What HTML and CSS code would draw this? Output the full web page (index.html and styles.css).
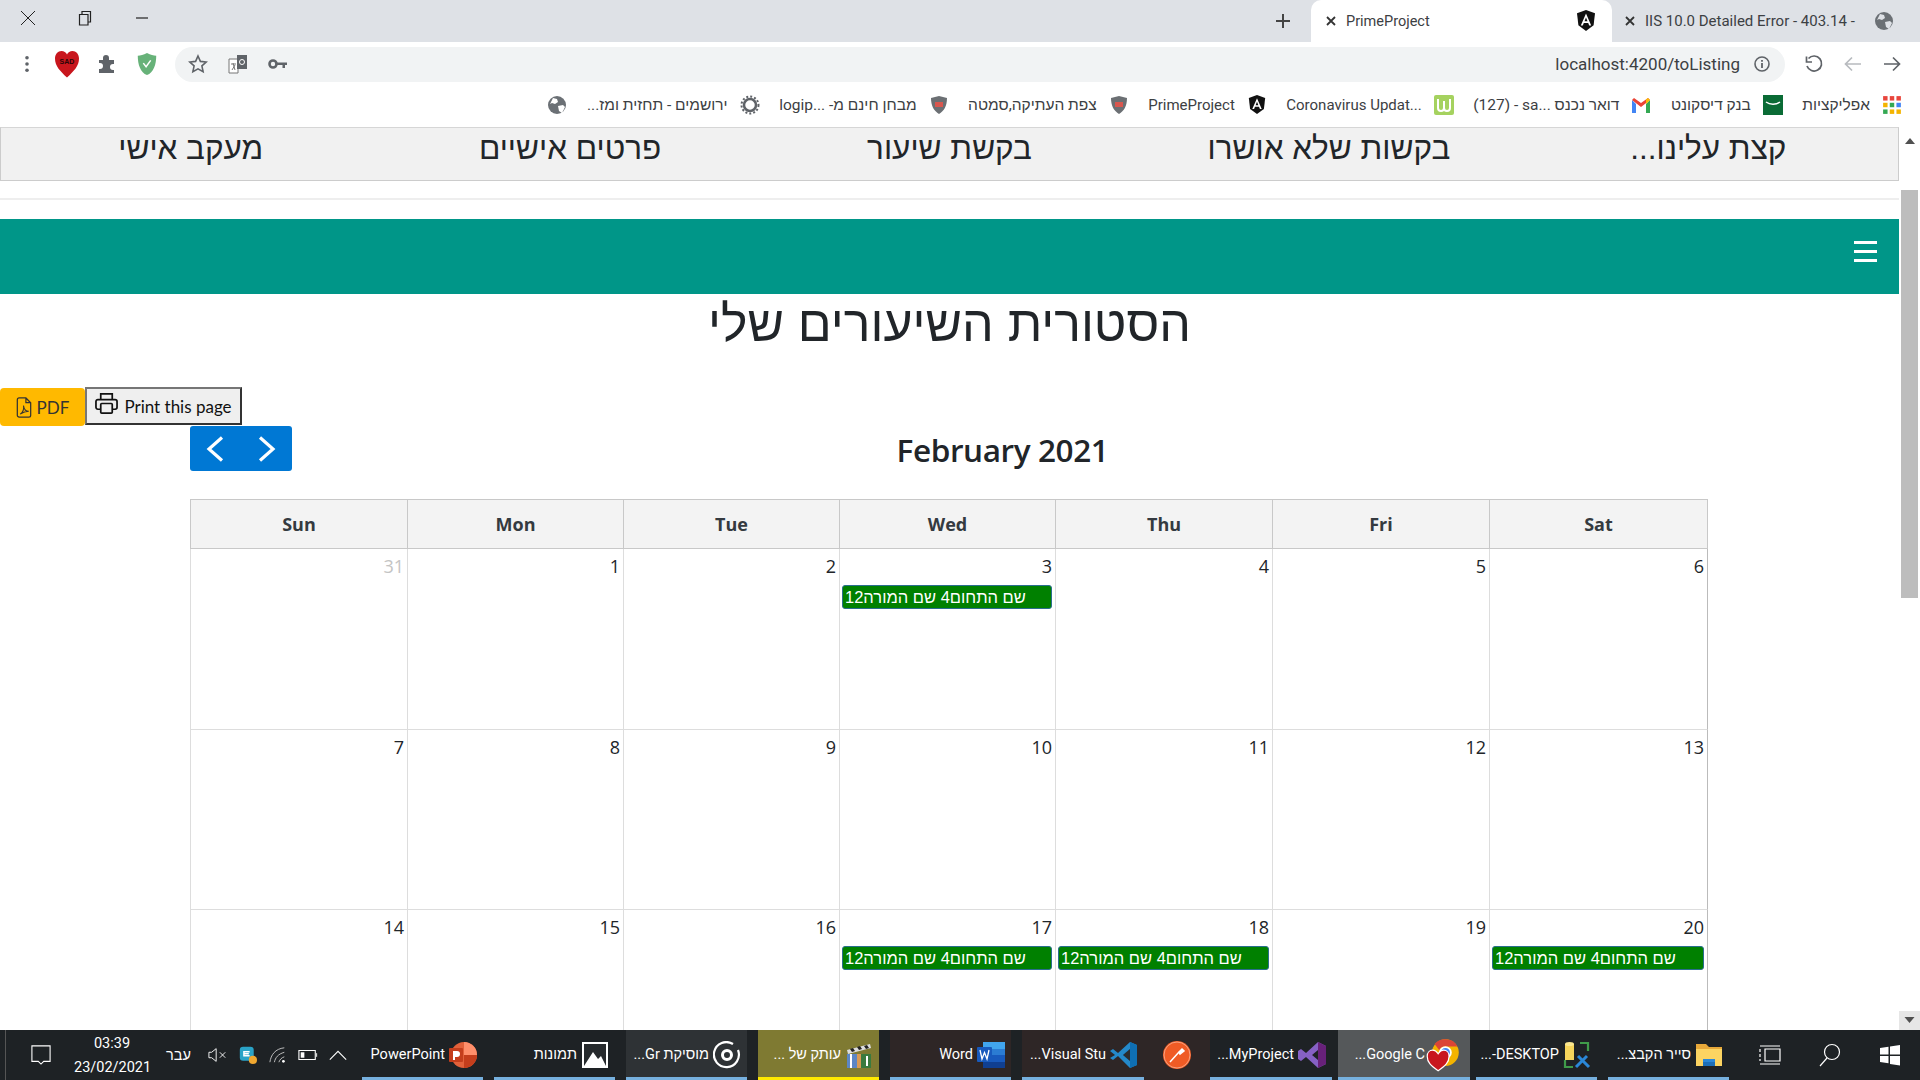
FILE: index.html
```html
<!DOCTYPE html>
<html lang="he">
<head>
  <meta charset="UTF-8" />
  <title>PrimeProject</title>
  <link rel="stylesheet" href="styles.css">
</head>
<body>
  <div class="tabstrip">
    <div class="win-controls">
      <svg class="win-icon" viewBox="0 0 16 16"><path d="M1 1l14 14M15 1L1 15" fill="none" stroke="#222"/></svg>
      <svg class="win-icon" viewBox="0 0 16 16"><path d="M2.500 4.500H11V15H2.500zM5 4.500v-3h8.500V12H11" fill="none" stroke="#222" stroke-width="1.200"/></svg>
      <svg class="win-icon" viewBox="0 0 16 16"><path d="M2 8h12" stroke="#222" stroke-width="1.200"/></svg>
    </div>
    <svg class="new-tab" viewBox="0 0 16 16"><path d="M8 1v14M1 8h14" stroke="#444" stroke-width="2"/></svg>
    <div class="tab tab-active">
      <svg class="tab-close" viewBox="0 0 10 10"><path d="M1 1l8 8M9 1L1 9" stroke="#333" stroke-width="1.800"/></svg>
      <span class="tab-title">PrimeProject</span>
      <svg class="fav" viewBox="0 0 20 22"><path d="M10 0L1 3.300l1.400 12L10 21l7.600-5.700 1.400-12z" fill="#111"/><path d="M10 3.500L4.800 15.500h2l1-2.600h4.400l1 2.600h2zM8.500 11.200L10 7.500l1.500 3.700z" fill="#fff"/></svg>
    </div>
    <div class="tab tab-other">
      <svg class="tab-close" viewBox="0 0 10 10"><path d="M1 1l8 8M9 1L1 9" stroke="#333" stroke-width="1.800"/></svg>
      <span class="tab-title">IIS 10.0 Detailed Error - 403.14 -</span>
      <svg class="fav" viewBox="0 0 20 20"><circle cx="10" cy="10" r="9" fill="#6b7075"/><path d="M6 3l4 1 1 3-3 2-3-1-2 1zM11 11l5-1 2 2-3 6-3-2z" fill="#dee1e6"/></svg>
    </div>
  </div>

  <div class="toolbar">
    <svg class="dots" viewBox="0 0 6 20"><circle cx="3" cy="3" r="2" fill="#5f6368"/><circle cx="3" cy="10" r="2" fill="#5f6368"/><circle cx="3" cy="17" r="2" fill="#5f6368"/></svg>
    <svg class="heart" viewBox="0 0 28 28"><path d="M14 27.500C7 21 2 16 2 8.500 2 4 5 1 8.500 1c2.500 0 4.500 1.500 5.500 3.500C15 2.500 17 1 19.500 1 23 1 26 4 26 8.500c0 7.500-5 12.500-12 19z" fill="#c8161d"/><text class="heart-text" x="14" y="14" text-anchor="middle">SAD</text></svg>
    <svg class="puzzle" viewBox="0 0 20 20"><path d="M2 6h4V4a3 3 0 016 0v2h5v4h-1a3 3 0 000 6h1v3H2v-4h1a3 3 0 000-6H2z" fill="#5f6368"/></svg>
    <svg class="shield" viewBox="0 0 22 26"><path d="M11 1C7 3 4 4 1 4c0 10 3 18 10 21 7-3 10-11 10-21-3 0-6-1-10-3z" fill="#67b279"/><path d="M7 12l3 4 5-7" fill="none" stroke="#fff" stroke-width="1.600"/></svg>
    <div class="address">
      <svg class="star" viewBox="0 0 20 20"><path d="M10 2l2.400 5.400 5.800.6-4.300 3.900 1.200 5.800L10 14.800l-5.100 2.900 1.200-5.800L1.800 8l5.800-.6z" fill="none" stroke="#5f6368" stroke-width="1.600"/></svg>
      <svg class="translate" viewBox="0 0 20 20"><path d="M1 5h9v14H1z" fill="#fff" stroke="#777"/><path d="M9 1h10v14H9z" fill="#5f6368"/><circle cx="14" cy="8" r="2.500" fill="none" stroke="#fff"/><path d="M3 10h5M5 9l2 7M7 11l-3 5" stroke="#777"/></svg>
      <svg class="key" viewBox="0 0 20 12"><circle cx="5" cy="6" r="3.500" fill="none" stroke="#5f6368" stroke-width="2.600"/><path d="M9 4.500h10V7h-2v3h-2.500V7H9z" fill="#5f6368"/></svg>
      <span class="url">localhost:4200/toListing</span>
      <svg class="info" viewBox="0 0 18 18"><circle cx="9" cy="9" r="7" fill="none" stroke="#5f6368" stroke-width="1.600"/><path d="M9 8v5M9 5v1.800" stroke="#5f6368" stroke-width="1.800"/></svg>
    </div>
    <svg class="nav-arrow" viewBox="0 0 20 20"><path d="M4.500 4.500A7.500 7.500 0 113 12" fill="none" stroke="#5f6368" stroke-width="1.700"/><path d="M2.500 2.500V8H8" fill="none" stroke="#5f6368" stroke-width="1.700"/></svg>
    <svg class="nav-arrow" viewBox="0 0 20 20"><path d="M18 10H3M9 3.500L2.500 10 9 16.500" fill="none" stroke="#b8bbbf" stroke-width="1.700"/></svg>
    <svg class="nav-arrow" viewBox="0 0 20 20"><path d="M2 10h15M11 3.500l6.500 6.500-6.500 6.500" fill="none" stroke="#5f6368" stroke-width="1.700"/></svg>
  </div>

  <div class="bookmarks" dir="rtl">
    <div class="bookmark">
      <svg class="bm-icon" viewBox="0 0 18 18"><rect x="1" y="1" width="4" height="4" fill="#e8453c"/><rect x="7" y="1" width="4" height="4" fill="#e8453c"/><rect x="13" y="1" width="4" height="4" fill="#e8453c"/><rect x="1" y="7" width="4" height="4" fill="#f4b400"/><rect x="7" y="7" width="4" height="4" fill="#34a853"/><rect x="13" y="7" width="4" height="4" fill="#4285f4"/><rect x="1" y="13" width="4" height="4" fill="#34a853"/><rect x="7" y="13" width="4" height="4" fill="#f4b400"/><rect x="13" y="13" width="4" height="4" fill="#f4b400"/></svg>
      <span>אפליקציות</span>
    </div>
    <div class="bookmark">
      <svg class="bm-icon" viewBox="0 0 20 20"><rect width="20" height="20" fill="#0a6b35"/><path d="M3 7c4 3 10 3 14 0" fill="none" stroke="#fff" stroke-width="1.500"/></svg>
      <span>בנק דיסקונט</span>
    </div>
    <div class="bookmark">
      <svg class="bm-icon" viewBox="0 0 20 16"><path d="M1 3v13h4V7z" fill="#4285f4"/><path d="M19 3v13h-4V7z" fill="#34a853"/><path d="M1 3l9 7 9-7-2-2-7 5-7-5z" fill="#ea4335"/><path d="M15 7l4-4-2-2-2 1.500z" fill="#fbbc04"/></svg>
      <span>דואר נכנס ...<bdi>sa</bdi> - <bdi>(127)</bdi></span>
    </div>
    <div class="bookmark">
      <svg class="bm-icon" viewBox="0 0 20 20"><rect width="20" height="20" rx="2" fill="#a5d25f"/><path d="M4 4v9q0 3 3 3t3-3V6v7q0 3 3 3t3-3V4" fill="none" stroke="#fff" stroke-width="2"/></svg>
      <span class="bm-latin" dir="ltr">Coronavirus Updat...</span>
    </div>
    <div class="bookmark">
      <svg class="bm-icon" viewBox="0 0 20 22"><path d="M10 0L1 3.300l1.400 12L10 21l7.600-5.700 1.400-12z" fill="#111"/><path d="M10 3.500L4.800 15.500h2l1-2.600h4.400l1 2.600h2zM8.500 11.200L10 7.500l1.500 3.700z" fill="#fff"/></svg>
      <span class="bm-latin" dir="ltr">PrimeProject</span>
    </div>
    <div class="bookmark">
      <svg class="bm-icon" viewBox="0 0 18 20"><path d="M9 1L1 3c0 8 3 13 8 16 5-3 8-8 8-16z" fill="#6b6f73"/><path d="M5 7h8v5H5z" fill="#d8564e"/></svg>
      <span>צפת העתיקה,סמטה</span>
    </div>
    <div class="bookmark">
      <svg class="bm-icon" viewBox="0 0 18 20"><path d="M9 1L1 3c0 8 3 13 8 16 5-3 8-8 8-16z" fill="#6b6f73"/><path d="M5 7h8v5H5z" fill="#d8564e"/></svg>
      <span>מבחן חינם מ- ...logip</span>
    </div>
    <div class="bookmark">
      <svg class="bm-icon" viewBox="0 0 20 20"><circle cx="10" cy="10" r="6" fill="none" stroke="#5f6368" stroke-width="2.500"/><circle cx="10" cy="10" r="8.500" fill="none" stroke="#5f6368" stroke-width="2" stroke-dasharray="2 2"/></svg>
      <span>ירושמים - תחזית ומז...</span>
    </div>
    <svg class="bm-icon" viewBox="0 0 20 20"><circle cx="10" cy="10" r="9" fill="#6b7075"/><path d="M6 3l4 1 1 3-3 2-3-1-2 1zM11 11l5-1 2 2-3 6-3-2z" fill="#fff"/></svg>
  </div>

  <div class="viewport">
    <div class="page">
      <div class="top-nav" dir="rtl">
        <a>קצת עלינו...</a>
        <a>בקשות שלא אושרו</a>
        <a>בקשת שיעור</a>
        <a>פרטים אישיים</a>
        <a>מעקב אישי</a>
      </div>
      <div class="nav-gap"></div>
      <div class="teal-bar">
        <div class="burger"><span></span><span></span><span></span></div>
      </div>
      <h1 class="page-title" dir="rtl">הסטורית השיעורים שלי</h1>
      <div class="export-row">
        <button class="btn-pdf">
          <svg class="pdf-icon" viewBox="0 0 16 22"><path d="M1 3a2 2 0 012-2h7l5 5v13a2 2 0 01-2 2H3a2 2 0 01-2-2zM10 1v5h5" fill="none" stroke="#333" stroke-width="1.300"/><path d="M4 18c3-2 4-6 3.500-9 .5 4 2.500 6 5.500 6-3 0-6 1-9 3z" fill="none" stroke="#333" stroke-width="1.100"/></svg>
          PDF
        </button>
        <button class="btn-print">
          <svg class="print-icon" viewBox="0 0 24 24"><path d="M6 8V2h12v6M6 18H3a2 2 0 01-2-2v-6a2 2 0 012-2h18a2 2 0 012 2v6a2 2 0 01-2 2h-3" fill="none" stroke="#111" stroke-width="1.800"/><rect x="6" y="12" width="12" height="10" rx="1" fill="none" stroke="#111" stroke-width="1.800"/></svg>
          Print this page
        </button>
      </div>

      <div class="calendar">
        <div class="cal-toolbar">
          <div class="cal-nav">
            <svg class="chev" viewBox="0 0 20 26"><path d="M17 1.500L4 13l13 11.500" fill="none" stroke="#fff" stroke-width="3.200"/></svg>
            <svg class="chev" viewBox="0 0 20 26"><path d="M3 1.500L16 13 3 24.500" fill="none" stroke="#fff" stroke-width="3.200"/></svg>
          </div>
          <h2 class="cal-title">February 2021</h2>
          <div></div>
        </div>
        <div class="cal-head">
          <div>Sun</div><div>Mon</div><div>Tue</div><div>Wed</div><div>Thu</div><div>Fri</div><div>Sat</div>
        </div>
        <div class="cal-body">
          <div class="day muted">31</div>
          <div class="day">1</div>
          <div class="day">2</div>
          <div class="day">3<div class="event">שם התחום4 שם המורה12</div></div>
          <div class="day">4</div>
          <div class="day">5</div>
          <div class="day">6</div>
          <div class="day">7</div>
          <div class="day">8</div>
          <div class="day">9</div>
          <div class="day">10</div>
          <div class="day">11</div>
          <div class="day">12</div>
          <div class="day">13</div>
          <div class="day">14</div>
          <div class="day">15</div>
          <div class="day">16</div>
          <div class="day">17<div class="event">שם התחום4 שם המורה12</div></div>
          <div class="day">18<div class="event">שם התחום4 שם המורה12</div></div>
          <div class="day">19</div>
          <div class="day">20<div class="event">שם התחום4 שם המורה12</div></div>
        </div>
      </div>
    </div>
    <div class="scrollbar">
      <svg class="scroll-arrow" viewBox="0 0 10 6"><path d="M5 0l5 6H0z" fill="#505050"/></svg>
      <div class="scroll-track"><div class="scroll-thumb"></div></div>
      <svg class="scroll-arrow scroll-down" viewBox="0 0 10 6"><path d="M5 6l5-6H0z" fill="#505050"/></svg>
    </div>
  </div>

  <div class="taskbar">
    <div class="tray">
      <svg class="tray-notify" viewBox="0 0 22 22"><path d="M1 1h20v17h-7l-3 3-3-3H1z" fill="none" stroke="#fff" stroke-width="1.200"/></svg>
      <div class="clock"><div>03:39</div><div>23/02/2021</div></div>
      <span class="lang">עבר</span>
      <svg class="tray-icon" viewBox="0 0 22 18"><path d="M1 6h3l5-4v14l-5-4H1z" fill="none" stroke="#fff"/><path d="M13 6l6 6M19 6l-6 6" stroke="#fff"/></svg>
      <svg class="tray-icon" viewBox="0 0 22 22"><rect x="1" y="1" width="17" height="17" rx="4" fill="#2aa3c7"/><path d="M13 7H6v5h7M6 9.500h6" fill="none" stroke="#fff" stroke-width="1.800"/><circle cx="17" cy="17" r="5" fill="#f0a830"/></svg>
      <svg class="tray-icon" viewBox="0 0 22 20"><path d="M2 18C3 10 8 3 18 2M7 18c1-5 4-9 11-11M12 18c1-3 3-5 6-6" fill="none" stroke="#ccc"/><circle cx="17" cy="17" r="1.500" fill="#fff"/></svg>
      <svg class="tray-icon" viewBox="0 0 22 14"><path d="M1 2h18v10H1z" fill="none" stroke="#fff" stroke-width="1.200"/><rect x="3" y="4" width="4" height="6" fill="#fff"/><path d="M20.500 5v4" stroke="#fff"/></svg>
      <svg class="tray-icon" viewBox="0 0 22 12"><path d="M2 11l9-9 9 9" fill="none" stroke="#fff" stroke-width="1.200"/></svg>
    </div>
    <div class="task-list">
      <div class="task">
        <span>PowerPoint</span>
        <svg class="task-icon" viewBox="0 0 28 28"><circle cx="15" cy="14" r="13" fill="#e2613a"/><path d="M15 1a13 13 0 0113 13H15z" fill="#ff8f6b"/><path d="M15 14h13a13 13 0 01-13 13z" fill="#c43e1c"/><rect x="0" y="7" width="14" height="14" rx="1" fill="#c43e1c"/><path d="M4 10h4a2.500 2.500 0 010 6H6v3H4z" fill="#fff"/></svg>
      </div>
      <div class="task" dir="rtl">
        <svg class="task-icon" viewBox="0 0 28 28"><rect x="1" y="1" width="26" height="26" fill="#fff"/><rect x="3" y="3" width="22" height="22" fill="#262a2d"/><path d="M3 25l9-14 5 7 3-3 5 10z" fill="#fff"/></svg>
        <span>תמונות</span>
      </div>
      <div class="task task-grey" dir="rtl">
        <svg class="task-icon" viewBox="0 0 28 28"><path d="M20 3A12.500 12.500 0 1025 9" fill="none" stroke="#fff" stroke-width="2.200"/><circle cx="14" cy="14" r="4.500" fill="none" stroke="#fff" stroke-width="3"/></svg>
        <span>מוסיקת Gr...</span>
      </div>
      <div class="task task-olive" dir="rtl">
        <svg class="task-icon" viewBox="0 0 28 28"><path d="M2 9l23-6 1 4L3 13z" fill="#ddd"/><path d="M5 8l3-1 2 3-3 1zM12 6l3-1 2 3-3 1zM19 5l3-1 2 3-3 1z" fill="#222"/><rect x="2" y="13" width="10" height="14" fill="#5c86c4"/><rect x="12" y="13" width="4" height="14" fill="#d99a55"/><rect x="16" y="13" width="10" height="14" fill="#3a7a3e"/><path d="M6 13v14M22 15v10" stroke="#fff" stroke-width="2"/></svg>
        <span>עותק של ...</span>
      </div>
      <div class="task task-brown">
        <span>Word</span>
        <svg class="task-icon" viewBox="0 0 28 28"><rect x="6" y="1" width="22" height="26" rx="2" fill="#2b7cd3"/><rect x="6" y="1" width="22" height="7" fill="#41a5ee"/><rect x="6" y="14" width="22" height="7" fill="#185abd"/><rect x="6" y="21" width="22" height="6" fill="#103f91"/><rect x="0" y="6" width="15" height="15" rx="1" fill="#185abd"/><path d="M3 9l2 9 2.500-6.500L10 18l2-9" fill="none" stroke="#fff" stroke-width="1.300"/></svg>
      </div>
      <div class="task task-brown task-code" dir="rtl">
        <svg class="task-icon" viewBox="0 0 28 28"><path d="M20 1l7 3v20l-7 3L8 15l-5 4-3-2 5-3-5-4 3-2 5 4z" fill="#2489ca"/><path d="M20 1l7 3v20l-7 3zM20 8l-7 6 7 6z" fill="#0f6fb3"/><path d="M20 8l-7 6 7 6z" fill="#2b2d30"/></svg>
        <span>Visual Stu...</span>
      </div>
      <div class="task task-brown task-postman">
        <svg class="task-icon" viewBox="0 0 28 28"><circle cx="14" cy="14" r="14" fill="#ef5b25"/><circle cx="14" cy="14" r="13" fill="none" stroke="#f8a27f"/><path d="M7 21l9-10M16 11l3-3 2 2-4 3z" stroke="#fff" stroke-width="1.500" fill="#fff"/></svg>
      </div>
      <div class="task task-vs" dir="rtl">
        <svg class="task-icon" viewBox="0 0 28 28"><path d="M20 1l8 4v18l-8 4-12-11-5 4-3-2V10l3-2 5 4zM20 9l-6 5 6 5z" fill="#8661c5"/><path d="M20 1l8 4v18l-8 4z" fill="#68217a"/></svg>
        <span>MyProject...</span>
      </div>
      <div class="task task-chrome" dir="rtl">
        <svg class="task-icon" viewBox="0 0 28 28"><circle cx="16" cy="12" r="11" fill="#f4b400"/><path d="M16 1a11 11 0 0110 6H16a5 5 0 00-5 3L7 5a11 11 0 019-4z" fill="#db4437"/><circle cx="16" cy="12" r="4.500" fill="#4285f4" stroke="#fff" stroke-width="1.500"/><path d="M10 27C4 23 1 20 1 15c0-3 2-5 4.500-5 2 0 3.500 1.500 4.500 3 1-1.500 2.500-3 4.500-3C17 10 19 12 19 15c0 5-3 8-9 12z" fill="#c8161d" stroke="#fff"/></svg>
        <span>Google C...</span>
      </div>
      <div class="task" dir="rtl">
        <svg class="task-icon" viewBox="0 0 28 28"><path d="M2 3h9v16H2z" fill="#f6d55c"/><ellipse cx="6.500" cy="3" rx="4.500" ry="2" fill="#fbe78f"/><path d="M17 2h8v8M2 19v7h8" fill="none" stroke="#3f9b4a" stroke-width="2.200"/><path d="M13 26l11-11M15 15l11 11" stroke="#2b88d8" stroke-width="3"/></svg>
        <span>DESKTOP-...</span>
      </div>
      <div class="task" dir="rtl">
        <svg class="task-icon" viewBox="0 0 28 28"><path d="M1 3h10l3 3h13v19H1z" fill="#e8a93a"/><rect x="1" y="8" width="26" height="17" fill="#fcd462"/><path d="M8 25v-7h12v7h-4v-4h-4v4z" fill="#2b88d8"/><rect x="8" y="21" width="12" height="4" fill="#1d6fb8"/></svg>
        <span>סייר הקבצ...</span>
      </div>
    </div>
    <div class="sys-icons">
      <svg class="sys-icon" viewBox="0 0 22 24"><path d="M1 3h20M1 21h20M6 6h15v12H6zM1 6v3M1 11v3M1 16v2" fill="none" stroke="#fff" stroke-width="1.200"/></svg>
      <svg class="sys-icon" viewBox="0 0 22 24"><circle cx="13" cy="9" r="7.500" fill="none" stroke="#fff" stroke-width="1.200"/><path d="M8 15l-7 8" stroke="#fff" stroke-width="1.200"/></svg>
      <svg class="sys-icon" viewBox="0 0 22 24"><path d="M1 5l8.500-1.300V11.500H1zM11 3.400L21 2v9.500H11zM1 13h8.500v7.300L1 19zM11 13h10v9.500l-10-1.400z" fill="#fff"/></svg>
    </div>
  </div>
</body>
</html>
```

FILE: styles.css
```css
* {
  box-sizing: border-box;
}
html, body {
  margin: 0;
  padding: 0;
}
body {
  width: 1920px;
  height: 1080px;
  overflow: hidden;
  font-family: "Open Sans", "Liberation Sans", sans-serif;
  color: #212529;
  background: #fff;
}

/* browser chrome */
.tabstrip {
  height: 42px;
  background: #dee1e6;
  display: flex;
  align-items: flex-end;
}
.win-controls {
  display: flex;
  gap: 41px;
  align-items: center;
  height: 42px;
  padding: 0 0 6px 20px;
  margin-right: auto;
}
.win-icon {
  width: 16px;
  height: 16px;
}
.new-tab {
  width: 16px;
  height: 16px;
  margin: 0 20px 13px 0;
}
.tab {
  display: flex;
  align-items: center;
  height: 42px;
  font-size: 14.500px;
  color: #3c4043;
}
.tab-active {
  width: 301px;
  background: #fff;
  border-radius: 10px 10px 0 0;
  padding: 0 16px 0 10px;
}
.tab-other {
  width: 308px;
  padding: 0 26px 0 8px;
  font-size: 15px;
}
.tab-close {
  width: 10px;
  height: 10px;
  margin: 0 10px 0 5px;
  flex: none;
}
.tab-title {
  flex: 1;
  white-space: nowrap;
  font-family: "Roboto", "Liberation Sans", sans-serif;
}
.fav {
  width: 20px;
  height: 22px;
  flex: none;
}

.toolbar {
  height: 42px;
  background: #fff;
  display: flex;
  align-items: center;
  padding: 2px 0 0 24px;
}
.dots {
  width: 6px;
  height: 18px;
}
.heart {
  width: 28px;
  height: 28px;
  margin-left: 23px;
}
.heart-text {
  font-family: "Liberation Sans", sans-serif;
  font-size: 7px;
  font-weight: 700;
  fill: #2a0507;
}
.puzzle {
  width: 20px;
  height: 20px;
  margin-left: 16px;
}
.shield {
  width: 22px;
  height: 24px;
  margin-left: 19px;
}
.address {
  width: 1610px;
  height: 35px;
  margin-left: 17px;
  background: #f1f3f4;
  border-radius: 18px;
  display: flex;
  align-items: center;
  padding: 0 14px 0 13px;
}
.star {
  width: 20px;
  height: 20px;
}
.translate {
  width: 20px;
  height: 20px;
  margin-left: 20px;
}
.key {
  width: 20px;
  height: 12px;
  margin-left: 20px;
}
.url {
  margin-left: auto;
  font-family: "Roboto", "Liberation Sans", sans-serif;
  font-size: 17px;
  color: #3c4043;
}
.info {
  width: 18px;
  height: 18px;
  margin-left: 13px;
}
.nav-arrow {
  width: 20px;
  height: 20px;
  margin-left: 19px;
}

.bookmarks {
  height: 43px;
  background: #fff;
  display: flex;
  align-items: center;
  padding: 0 18px 2px 0;
  gap: 19.500px;
  font-family: "Roboto", "Liberation Sans", sans-serif;
  font-size: 15.500px;
  color: #3c4043;
}
.bookmark {
  display: flex;
  align-items: center;
  gap: 12px;
  white-space: nowrap;
}
.bm-latin {
  font-size: 15px;
}
.bm-icon {
  width: 20px;
  height: 20px;
  flex: none;
}

/* page area */
.viewport {
  height: 903px;
  display: flex;
  overflow: hidden;
}
.page {
  width: 1899px;
  flex: none;
}
.top-nav {
  height: 54px;
  display: grid;
  grid-template-columns: repeat(5, 1fr);
  background: #f1f1f1;
  border: 1px solid #ccc;
  border-top-color: #d6d6d6;
  font-size: 31.500px;
  line-height: 38px;
  font-family: "Liberation Sans", sans-serif;
}
.top-nav a {
  text-align: center;
  padding-top: 1px;
  color: #212529;
}
.nav-gap {
  height: 19px;
  border-bottom: 2px solid #eee;
}
.teal-bar {
  height: 75px;
  margin-top: 19px;
  background: #009688;
  display: flex;
  align-items: center;
  justify-content: flex-end;
  padding-right: 22px;
}
.burger {
  width: 23px;
  margin-bottom: 10px;
  display: flex;
  flex-direction: column;
  gap: 6px;
}
.burger span {
  height: 3px;
  background: #fff;
}
.page-title {
  margin: 0;
  height: 93px;
  text-align: center;
  font-family: "Liberation Sans", sans-serif;
  font-size: 50px;
  line-height: 60px;
  font-weight: 400;
  color: #212529;
}
.export-row {
  display: flex;
  align-items: flex-start;
  height: 39px;
}
.btn-pdf {
  width: 85px;
  height: 38px;
  margin-top: 1px;
  background: #ffb900;
  border: none;
  border-radius: 4px;
  display: flex;
  align-items: center;
  justify-content: center;
  gap: 5px;
  font-family: "Lato", sans-serif;
  font-size: 17px;
  color: #333;
  padding: 0;
}
.pdf-icon {
  width: 16px;
  height: 21px;
}
.btn-print {
  width: 157px;
  height: 38px;
  background: #efefef;
  border: 2px solid;
  border-color: #767676 #333 #333 #767676;
  display: flex;
  align-items: center;
  justify-content: center;
  gap: 6px;
  font-family: "Lato", sans-serif;
  font-size: 17px;
  color: #111;
  padding: 0;
}
.print-icon {
  width: 23px;
  height: 23px;
  margin-top: -6px;
}
.calendar {
  width: 1518px;
  margin-left: 190px;
}
.cal-toolbar {
  height: 45px;
  margin-bottom: 28px;
  display: flex;
  justify-content: space-between;
  align-items: center;
}
.cal-nav {
  width: 102px;
  height: 45px;
  background: #0078d4;
  border-radius: 3px;
  display: flex;
  align-items: center;
  justify-content: space-between;
  padding: 0 15px;
}
.chev {
  width: 20px;
  height: 26px;
}
.cal-title {
  margin: 0 0 0 5px;
  padding-top: 1px;
  font-size: 31.500px;
  font-weight: 600;
  line-height: 45px;
  color: #212529;
  letter-spacing: -0.4px;
}
.cal-head, .cal-body {
  display: grid;
  grid-template-columns: 217px 216px 216px 216px 217px 217px 1fr;
}
.cal-head {
  height: 50px;
  background: #f3f3f3;
  border: 1px solid #c8c8c8;
  border-right: none;
  font-weight: 700;
  font-size: 18px;
  color: #343a40;
  text-align: center;
  line-height: 48px;
}
.cal-head div {
  border-right: 1px solid #c8c8c8;
}
.cal-body {
  grid-auto-rows: 180.500px;
  border-left: 1px solid #ddd;
}
.day {
  border-right: 1px solid #ddd;
  border-bottom: 1px solid #ddd;
  padding: 5px 3px 0 2px;
  text-align: right;
  font-size: 18px;
  line-height: 25px;
  color: #212529;
}
.day:nth-child(7n) {
  border-right-color: #bbb;
}
.muted {
  color: #c4c4c4;
}
.event {
  height: 24px;
  margin-top: 6px;
  background: #008000;
  border: 1px solid #2a6e8e;
  border-radius: 3px;
  color: #fff;
  font-size: 16.500px;
  line-height: 22px;
  text-align: left;
  padding-left: 2px;
  white-space: nowrap;
  overflow: hidden;
  font-family: "Liberation Sans", sans-serif;
}

.scrollbar {
  width: 21px;
  display: flex;
  flex-direction: column;
  align-items: center;
  background: #fff;
  padding-top: 11px;
}
.scroll-arrow {
  width: 10px;
  height: 6px;
  flex: none;
}
.scroll-track {
  flex: 1;
  width: 100%;
  padding: 46px 2px 0 2px;
  min-height: 0;
}
.scroll-thumb {
  height: 408px;
  background: #bdbdbd;
}
.scroll-down {
  width: 21px;
  height: 19px;
  padding: 6px 5px 7px;
  background: #e6e6e6;
}

/* windows taskbar */
.taskbar {
  height: 50px;
  background: #1e2225;
  display: flex;
  color: #fff;
  font-family: "Roboto", "Liberation Sans", sans-serif;
  font-size: 14.500px;
}
.tray {
  width: 362px;
  flex: none;
  display: flex;
  align-items: center;
  padding-left: 30px;
  border-left: 1px solid #555;
  margin-left: 5px;
  margin-right: -5px;
}
.tray-notify {
  width: 20px;
  height: 20px;
  margin-left: -5px;
  margin-right: 23px;
}
.clock {
  width: 76px;
  padding-top: 2px;
  text-align: center;
  font-size: 14.500px;
  line-height: 24px;
}
.lang {
  margin-left: 16px;
  width: 32px;
}
.tray-icon {
  width: 20px;
  height: 18px;
  margin-left: 10px;
}
.task-list {
  display: flex;
  gap: 11px;
  flex: none;
}
.task {
  position: relative;
  width: 121px;
  height: 50px;
  display: flex;
  align-items: center;
  gap: 4px;
  padding: 0 6px 1px;
  white-space: nowrap;
  overflow: hidden;
}
.task:not([dir="rtl"]) {
  justify-content: flex-end;
}
.task::after {
  content: "";
  position: absolute;
  left: 0;
  right: 0;
  bottom: 0;
  height: 3px;
  background: #76b0de;
}
.task-icon {
  width: 28px;
  height: 28px;
  flex: none;
}
.task-grey {
  background: #2e3235;
}
.task-olive {
  background: #7f7a32;
}
.task-olive::after {
  background: #ffe900;
}
.task-brown {
  background: #2e2626;
}
.task-code {
  width: 122px;
  margin-right: -11px;
}
.task-postman {
  width: 66px;
  margin-right: -11px;
}
.task-postman:not([dir="rtl"]) {
  justify-content: center;
  padding: 0 0 1px;
}
.task-postman::after {
  display: none;
}
.task-vs {
  width: 122px;
  margin-right: -5px;
}
.task-chrome {
  width: 132px;
  margin-right: -5px;
  background: #55585a;
  padding-right: 10px;
  gap: 1px;
}
.task-chrome .task-icon {
  width: 34px;
  height: 34px;
}
.sys-icons {
  display: flex;
  align-items: center;
  gap: 38px;
  margin-left: 30px;
}
.sys-icon {
  width: 22px;
  height: 24px;
}
```
